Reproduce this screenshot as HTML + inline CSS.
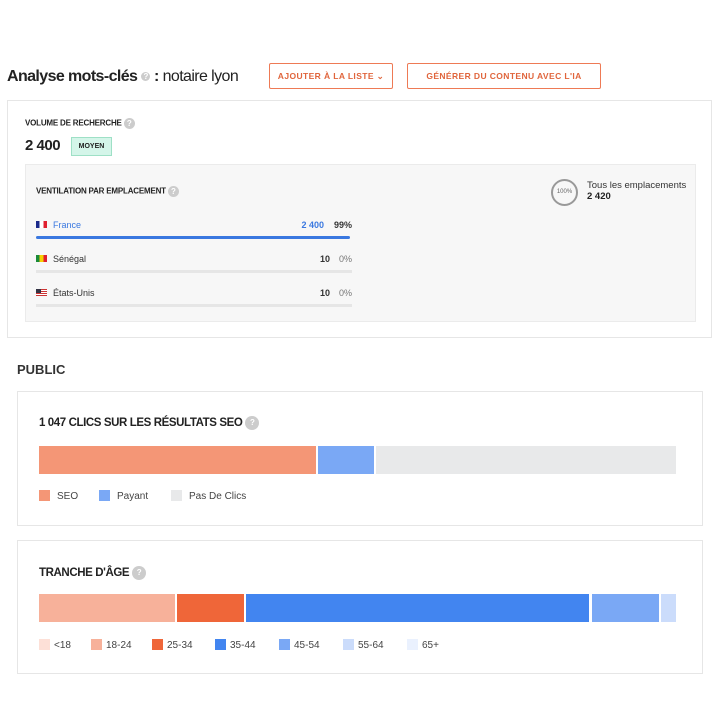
<!DOCTYPE html><html><head><style>
body{margin:0;width:720px;height:720px;background:#fff;font-family:"Liberation Sans",sans-serif;position:relative;overflow:hidden;color:#222}
.a{position:absolute}
.q{display:inline-block;width:11px;height:11px;border-radius:50%;background:#ccc;color:#fff;font-size:8px;text-align:center;line-height:11px;font-weight:bold;vertical-align:middle}
.btn{position:absolute;border:1px solid #ee7a55;color:#e0653c;font-size:8.5px;font-weight:bold;letter-spacing:.4px;text-align:center;border-radius:2px;line-height:24px;height:24px}
.card{position:absolute;border:1px solid #e6e6e6;background:#fff}
.t{font-weight:bold;font-size:9px;color:#222}
.bar{position:absolute;height:28px}
.lg{position:absolute;font-size:10px;color:#444}
.lg i{display:inline-block;width:11px;height:11px;vertical-align:-2px;margin-right:7px}
.row{position:absolute;left:36px;width:316px;font-size:9px}
</style></head><body>
<div class="a" style="left:7px;top:68px;font-size:16px;letter-spacing:-.6px"><b>Analyse mots-clés</b> <span class="q" style="width:9px;height:9px;line-height:9px">?</span> <b>:</b> notaire lyon</div>
<div class="btn" style="left:269px;top:63px;width:122px">AJOUTER À LA LISTE &#8964;</div>
<div class="btn" style="left:407px;top:63px;width:192px">GÉNÉRER DU CONTENU AVEC L'IA</div>
<div class="card" style="left:7px;top:100px;width:703px;height:236px"></div>
<div class="a t" style="left:25px;top:118px;font-size:8px;letter-spacing:-.2px">VOLUME DE RECHERCHE <span class="q">?</span></div>
<div class="a" style="left:25px;top:137px;font-size:15px;font-weight:bold;letter-spacing:-.5px">2 400</div>
<div class="a" style="left:71px;top:137px;width:39px;height:17px;background:#d4f5e9;border:1px solid #9ee0c6;font-size:7px;font-weight:bold;text-align:center;line-height:17px">MOYEN</div>
<div class="a" style="left:25px;top:164px;width:669px;height:156px;background:#f7f7f7;border:1px solid #ebebeb"></div>
<div class="a t" style="left:36px;top:186px;font-size:8px;letter-spacing:-.2px">VENTILATION PAR EMPLACEMENT <span class="q">?</span></div>
<div class="row" style="top:220px;color:#3a78e0"><span style="display:inline-block;width:11px;height:7px;background:linear-gradient(90deg,#1a2a8a 33%,#fff 33% 66%,#e02030 66%);margin-right:6px"></span>France<span class="a" style="right:28px;top:0;font-weight:bold">2 400</span><span class="a" style="right:0;top:0;color:#333;font-weight:bold">99%</span></div>
<div class="a" style="left:36px;top:236px;width:314px;height:3px;background:#3a78e0;border-radius:2px"></div>
<div class="row" style="top:254px;color:#333"><span style="display:inline-block;width:11px;height:7px;background:linear-gradient(90deg,#1a8a3a 33%,#f5d000 33% 66%,#e02030 66%);margin-right:6px"></span>Sénégal<span class="a" style="right:22px;top:0;font-weight:bold">10</span><span class="a" style="right:0;top:0;color:#777">0%</span></div>
<div class="a" style="left:36px;top:270px;width:316px;height:3px;background:#e6e6e6"></div>
<div class="row" style="top:288px;color:#333"><span style="display:inline-block;width:11px;height:7px;background:repeating-linear-gradient(#c33 0 1px,#fff 1px 2px);margin-right:6px;position:relative"><span style="position:absolute;left:0;top:0;width:5px;height:4px;background:#334"></span></span>États-Unis<span class="a" style="right:22px;top:0;font-weight:bold">10</span><span class="a" style="right:0;top:0;color:#777">0%</span></div>
<div class="a" style="left:36px;top:304px;width:316px;height:3px;background:#e6e6e6"></div>
<div class="a" style="left:551px;top:179px;width:23px;height:23px;border:2px solid #999;border-radius:50%;font-size:6px;color:#666;text-align:center;line-height:23px">100%</div>
<div class="a" style="left:587px;top:180px;font-size:9.5px;color:#333">Tous les emplacements<br><b style="color:#222">2 420</b></div>
<div class="a" style="left:17px;top:362px;font-size:13px;font-weight:bold;color:#333">PUBLIC</div>
<div class="card" style="left:17px;top:391px;width:684px;height:133px"></div>
<div class="a t" style="left:39px;top:416px;font-size:11.5px;letter-spacing:-.4px">1 047 CLICS SUR LES RÉSULTATS SEO <span class="q" style="width:14px;height:14px;line-height:14px">?</span></div>
<div class="bar" style="left:39px;top:446px;width:277px;background:#f49676"></div>
<div class="bar" style="left:318px;top:446px;width:56px;background:#7aa8f5"></div>
<div class="bar" style="left:376px;top:446px;width:300px;background:#e8e9ea"></div>
<div class="lg" style="left:39px;top:490px"><i style="background:#f49676"></i>SEO</div>
<div class="lg" style="left:99px;top:490px"><i style="background:#7aa8f5"></i>Payant</div>
<div class="lg" style="left:171px;top:490px"><i style="background:#e8e9ea"></i>Pas De Clics</div>
<div class="card" style="left:17px;top:540px;width:684px;height:132px"></div>
<div class="a t" style="left:39px;top:566px;font-size:11.5px;letter-spacing:-.4px">TRANCHE D'ÂGE <span class="q" style="width:14px;height:14px;line-height:14px">?</span></div>
<div class="bar" style="left:39px;top:594px;width:136px;background:#f7b19a"></div>
<div class="bar" style="left:177px;top:594px;width:67px;background:#ef6639"></div>
<div class="bar" style="left:246px;top:594px;width:343px;background:#4285f0"></div>
<div class="bar" style="left:592px;top:594px;width:67px;background:#7aa8f5"></div>
<div class="bar" style="left:661px;top:594px;width:15px;background:#cbdcfb"></div>
<div class="lg" style="left:39px;top:639px"><i style="background:#fde0d7;margin-right:4px"></i>&lt;18</div>
<div class="lg" style="left:91px;top:639px"><i style="background:#f7b19a;margin-right:4px"></i>18-24</div>
<div class="lg" style="left:152px;top:639px"><i style="background:#ef6639;margin-right:4px"></i>25-34</div>
<div class="lg" style="left:215px;top:639px"><i style="background:#4285f0;margin-right:4px"></i>35-44</div>
<div class="lg" style="left:279px;top:639px"><i style="background:#7aa8f5;margin-right:4px"></i>45-54</div>
<div class="lg" style="left:343px;top:639px"><i style="background:#cbdcfb;margin-right:4px"></i>55-64</div>
<div class="lg" style="left:407px;top:639px"><i style="background:#eaf1fe;margin-right:4px"></i>65+</div>
</body></html>
